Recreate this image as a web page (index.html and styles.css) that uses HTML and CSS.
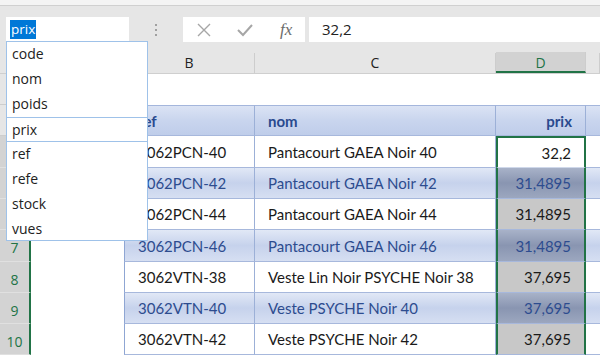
FILE: index.html
```html
<!DOCTYPE html>
<html lang="fr">
<head>
    <meta charset="UTF-8">
    <title>Classeur - prix</title>
    <link rel="stylesheet" href="styles.css">
</head>
<body>
    <div class="ribbon-edge"></div>

    <div class="formula-bar">
        <div class="name-box"><span class="name-sel">prix</span></div>
        <div class="grip"><i></i><i></i><i></i></div>
        <div class="fx-box">
            <svg class="fx-icon" width="14" height="14" viewBox="0 0 14 14">
                <path d="M1 1 L13 13 M13 1 L1 13" stroke="#a6a6a6" stroke-width="1.4" fill="none"/>
            </svg>
            <svg class="fx-icon" width="16" height="14" viewBox="0 0 16 14">
                <path d="M1 7 L6 12 L15 2" stroke="#a6a6a6" stroke-width="2" fill="none"/>
            </svg>
            <span class="fx-label">fx</span>
        </div>
        <div class="formula-input">32,2</div>
    </div>

    <!-- la colonne A et les lignes 2 à 6 sont cachées par la liste -->
    <div class="col-heads">
        <div class="col-head corner"></div>
        <div class="col-head"></div>
        <div class="col-head">B</div>
        <div class="col-head">C</div>
        <div class="col-head col-sel">D</div>
        <div class="col-head"></div>
    </div>

    <div class="sheet">
        <div class="row-head"></div>
        <div class="cell"></div><div class="cell"></div><div class="cell"></div><div class="cell"></div><div class="cell"></div>

        <div class="row-head"></div>
        <div class="cell"></div>
        <div class="cell t-head first">ref</div>
        <div class="cell t-head">nom</div>
        <div class="cell t-head num">prix</div>
        <div class="cell t-head last"></div>

        <div class="row-head on"></div>
        <div class="cell"></div>
        <div class="cell t-plain first">3062PCN-40</div>
        <div class="cell t-plain">Pantacourt GAEA Noir 40</div>
        <div class="cell t-plain num active">32,2</div>
        <div class="cell t-plain last"></div>

        <div class="row-head on"></div>
        <div class="cell"></div>
        <div class="cell t-band first">3062PCN-42</div>
        <div class="cell t-band">Pantacourt GAEA Noir 42</div>
        <div class="cell t-band num sel">31,4895</div>
        <div class="cell t-band last"></div>

        <div class="row-head on"></div>
        <div class="cell"></div>
        <div class="cell t-plain first">3062PCN-44</div>
        <div class="cell t-plain">Pantacourt GAEA Noir 44</div>
        <div class="cell t-plain num sel">31,4895</div>
        <div class="cell t-plain last"></div>

        <div class="row-head on">7</div>
        <div class="cell"></div>
        <div class="cell t-band first">3062PCN-46</div>
        <div class="cell t-band">Pantacourt GAEA Noir 46</div>
        <div class="cell t-band num sel">31,4895</div>
        <div class="cell t-band last"></div>

        <div class="row-head on">8</div>
        <div class="cell"></div>
        <div class="cell t-plain first">3062VTN-38</div>
        <div class="cell t-plain">Veste Lin Noir PSYCHE Noir 38</div>
        <div class="cell t-plain num sel">37,695</div>
        <div class="cell t-plain last"></div>

        <div class="row-head on">9</div>
        <div class="cell"></div>
        <div class="cell t-band first">3062VTN-40</div>
        <div class="cell t-band">Veste PSYCHE Noir 40</div>
        <div class="cell t-band num sel">37,695</div>
        <div class="cell t-band last"></div>

        <div class="row-head on">10</div>
        <div class="cell"></div>
        <div class="cell t-plain first">3062VTN-42</div>
        <div class="cell t-plain">Veste PSYCHE Noir 42</div>
        <div class="cell t-plain num sel">37,695</div>
        <div class="cell t-plain last"></div>
    </div>

    <ul class="name-list">
        <li>code</li>
        <li>nom</li>
        <li>poids</li>
        <li class="current">prix</li>
        <li>ref</li>
        <li>refe</li>
        <li>stock</li>
        <li>vues</li>
    </ul>
</body>
</html>
```

FILE: styles.css
```css
body {
    margin: 0;
    width: 600px;
    height: 356px;
    overflow: hidden;
    position: relative;
    background-color: #fff;
    font-family: 'Open Sans', sans-serif;
}

.ribbon-edge {
    height: 5px;
    background-color: #f4f4f4;
    border-bottom: 1px solid #d0d0d0;
}

/* barre de formule */
.formula-bar {
    display: flex;
    height: 36px;
    padding-top: 11px;
    box-sizing: border-box;
    background-color: #e6e6e6;
}

.name-box {
    width: 123px;
    height: 25px;
    margin-left: 6px;
    padding-left: 4px;
    box-sizing: border-box;
    background-color: #fff;
    display: flex;
    align-items: center;
}

.name-sel {
    background-color: #0078d7;
    color: #fff;
    font-size: 13.5px;
    line-height: 19px;
    padding: 0 1px;
}

.grip {
    width: 54px;
    display: flex;
    flex-direction: column;
    align-items: center;
    gap: 3px;
    padding-top: 7px;
}

.grip i {
    width: 2px;
    height: 2px;
    background-color: #a0a0a0;
}

.fx-box {
    width: 122px;
    height: 25px;
    background-color: #fff;
    display: flex;
    align-items: center;
    padding-left: 14px;
    gap: 26px;
    box-sizing: border-box;
}

.fx-label {
    font-family: 'Liberation Serif', serif;
    font-style: italic;
    font-size: 17px;
    color: #6b6b6b;
    margin-left: 1px;
}

.formula-input {
    flex: 1;
    height: 25px;
    margin-left: 4px;
    padding-left: 13px;
    background-color: #fff;
    font-size: 15px;
    line-height: 25px;
    color: #222;
}

/* en-têtes de colonnes */
.col-heads,
.sheet {
    display: grid;
    grid-template-columns: 31px 93px 131px 241px 90px 14px;
}

.col-heads {
    height: 32px;
    background-color: #e6e6e6;
    border-bottom: 1px solid #cfcfcf;
    box-sizing: border-box;
    align-items: end;
}

.col-head {
    height: 20px;
    border-right: 1px solid #cdcdcd;
    box-sizing: border-box;
    text-align: center;
    font-size: 14px;
    line-height: 20px;
    color: #222;
}

.col-head.col-sel {
    height: 21px;
    background-color: #d2d2d2;
    border-bottom: 2px solid #217346;
    color: #217346;
    line-height: 21px;
}

/* feuille */
.sheet {
    grid-template-rows: 31px 31px 32px 31px 31px 32px 31px 31px 31px;
}

.row-head {
    background-color: #e6e6e6;
    border-right: 1px solid #cdcdcd;
    border-bottom: 1px solid #cdcdcd;
    box-sizing: border-box;
    text-align: center;
    font-size: 14px;
    padding-top: 8px;
    color: #333;
}

.row-head.on {
    background-color: #d3d3d3;
    border-right: 2px solid #217346;
    border-bottom-color: #e0e0e0;
    color: #217346;
}

.cell {
    box-sizing: border-box;
    font-family: 'Lato', sans-serif;
    font-size: 15px;
    white-space: nowrap;
    overflow: hidden;
    display: flex;
    align-items: center;
    padding-left: 13px;
}

.cell.num {
    justify-content: flex-end;
    padding-right: 13px;
}

.t-head,
.t-plain,
.t-band {
    border-right: 1px solid #9cb0d7;
    border-bottom: 1px solid #a7b8dc;
}

.t-head.first,
.t-plain.first,
.t-band.first {
    border-left: 1px solid #8fa6d3;
}

.t-head.last,
.t-plain.last,
.t-band.last {
    border-right: none;
}

.t-head {
    border-top: 1px solid #a4b6dc;
    background: linear-gradient(#dbe3f4, #c9d5ee 50%, #bfcdea);
    color: #2a4a8e;
    font-weight: bold;
}

.t-plain {
    background-color: #fff;
    color: #1a1a1a;
}

.t-band {
    background: linear-gradient(#e1e8f6, #c6d2ec 50%, #d6dff2);
    color: #2d4c8f;
}

/* sélection colonne D */
.cell.active {
    border: 2px solid #217346;
    border-bottom: 1px solid #cfd8ea;
}

.cell.sel {
    border-left: 2px solid #217346;
    border-right: 2px solid #217346;
}

.t-plain.sel {
    background-color: #c8c8c8;
}

.t-band.sel {
    background: linear-gradient(#a8b2c8, #8995b1 50%, #9ca7bf);
}

/* liste déroulante de la zone Nom */
.name-list {
    position: absolute;
    left: 6px;
    top: 41px;
    width: 142px;
    height: 200px;
    margin: 0;
    padding: 0;
    list-style: none;
    box-sizing: border-box;
    background-color: #fff;
    border: 1px solid #9fc2e9;
}

.name-list li {
    height: 25px;
    line-height: 24px;
    padding-left: 5px;
    font-size: 14px;
    color: #222;
}

.name-list li.current {
    border: 1px solid #9fc2e9;
    margin: 0 -1px;
    box-sizing: border-box;
    line-height: 23px;
}
```
